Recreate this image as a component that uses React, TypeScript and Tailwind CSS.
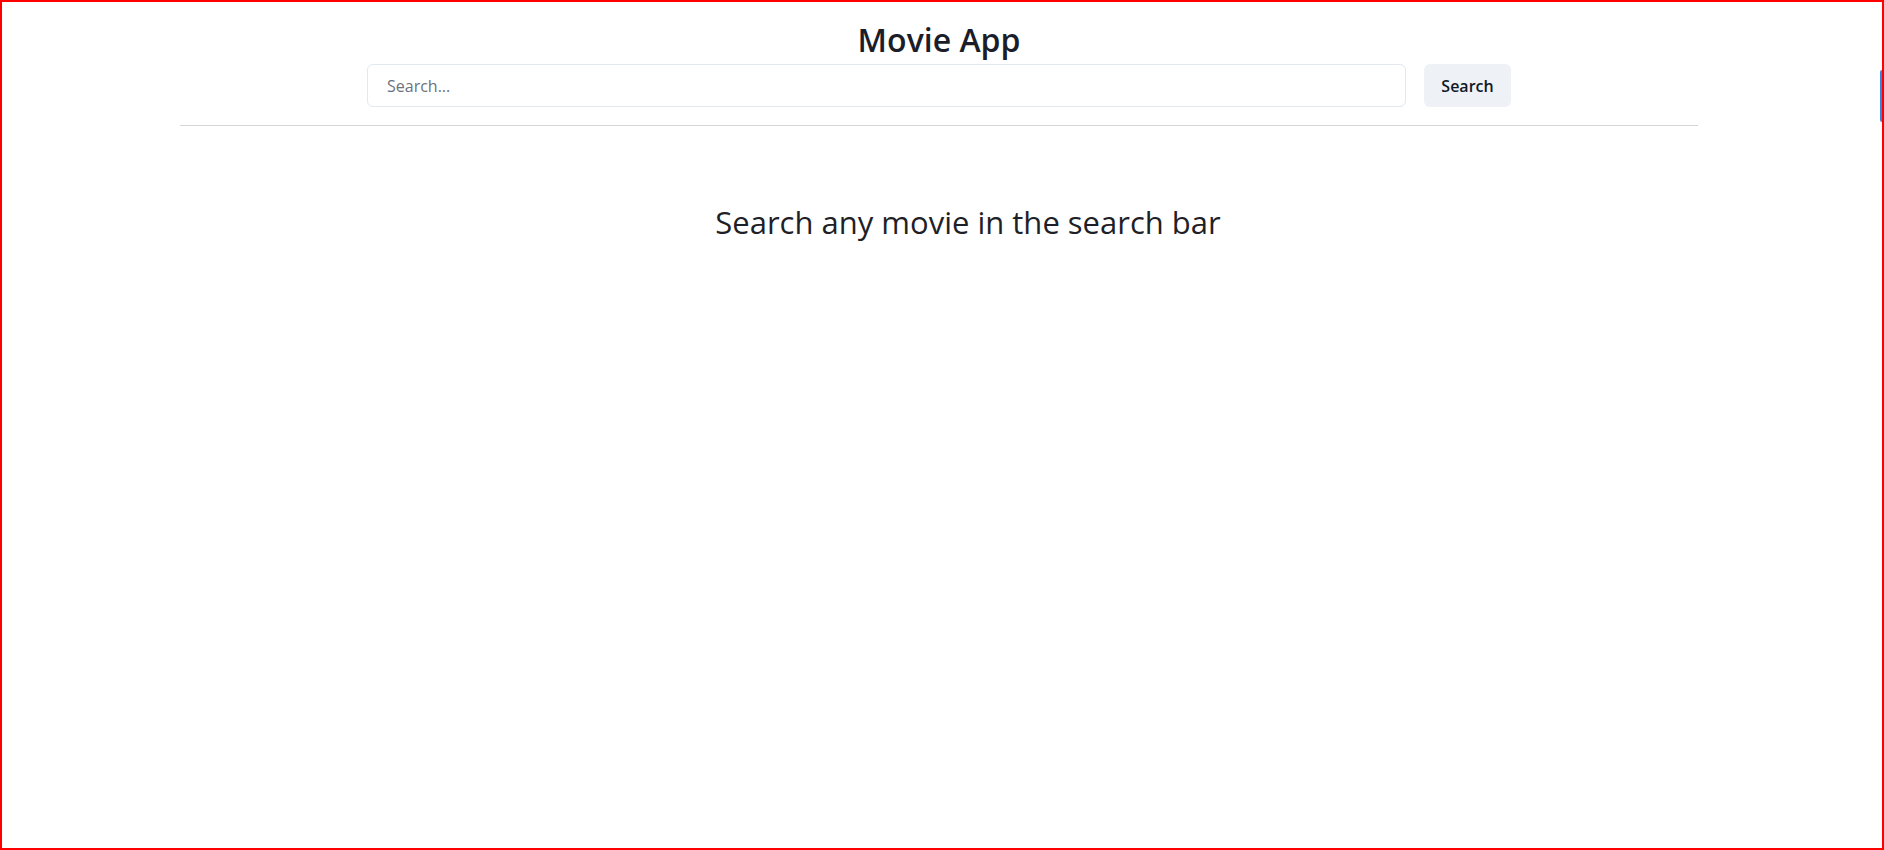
import { useState } from 'react';

const App = () => {
  const [query, setQuery] = useState('');

  return (
    <div className="relative h-[850px] w-full border-2 border-[#ff0000] bg-white font-['Open_Sans',sans-serif] text-[#1e1e24]">
      {/* header */}
      <div className="ml-[178px] w-[1518px]">
        <header className="border-b border-[#d6d6d6] pb-[18px]">
          <h1 className="pt-[18px] text-center text-[32px] font-semibold leading-[40px] text-[#1b1d28]">
            Movie App
          </h1>
          <div className="mt-[4px] flex justify-center gap-[18px]">
            <input
              value={query}
              onChange={(e) => setQuery(e.target.value)}
              placeholder="Search..."
              className="h-[43px] w-[1039px] rounded-md border border-[#e2e8f0] px-[19px] text-base text-[#1b1d28] placeholder:text-[#6b7280] focus:outline-none"
            />
            <button className="h-[43px] w-[87px] rounded-md bg-[#eef2f6] text-base font-semibold text-[#111827]">
              Search
            </button>
          </div>
        </header>

        {/* empty state */}
        <p className="mt-[73px] pl-[58px] text-center text-[31px] text-[#1f1f28]">
          Search any movie in the search bar
        </p>
      </div>

      {/* browser side tab */}
      <div className="absolute right-0 top-[68px] h-[52px] w-[2px] rounded-l bg-[#3b7fe3]" />
    </div>
  );
};

export default App;
